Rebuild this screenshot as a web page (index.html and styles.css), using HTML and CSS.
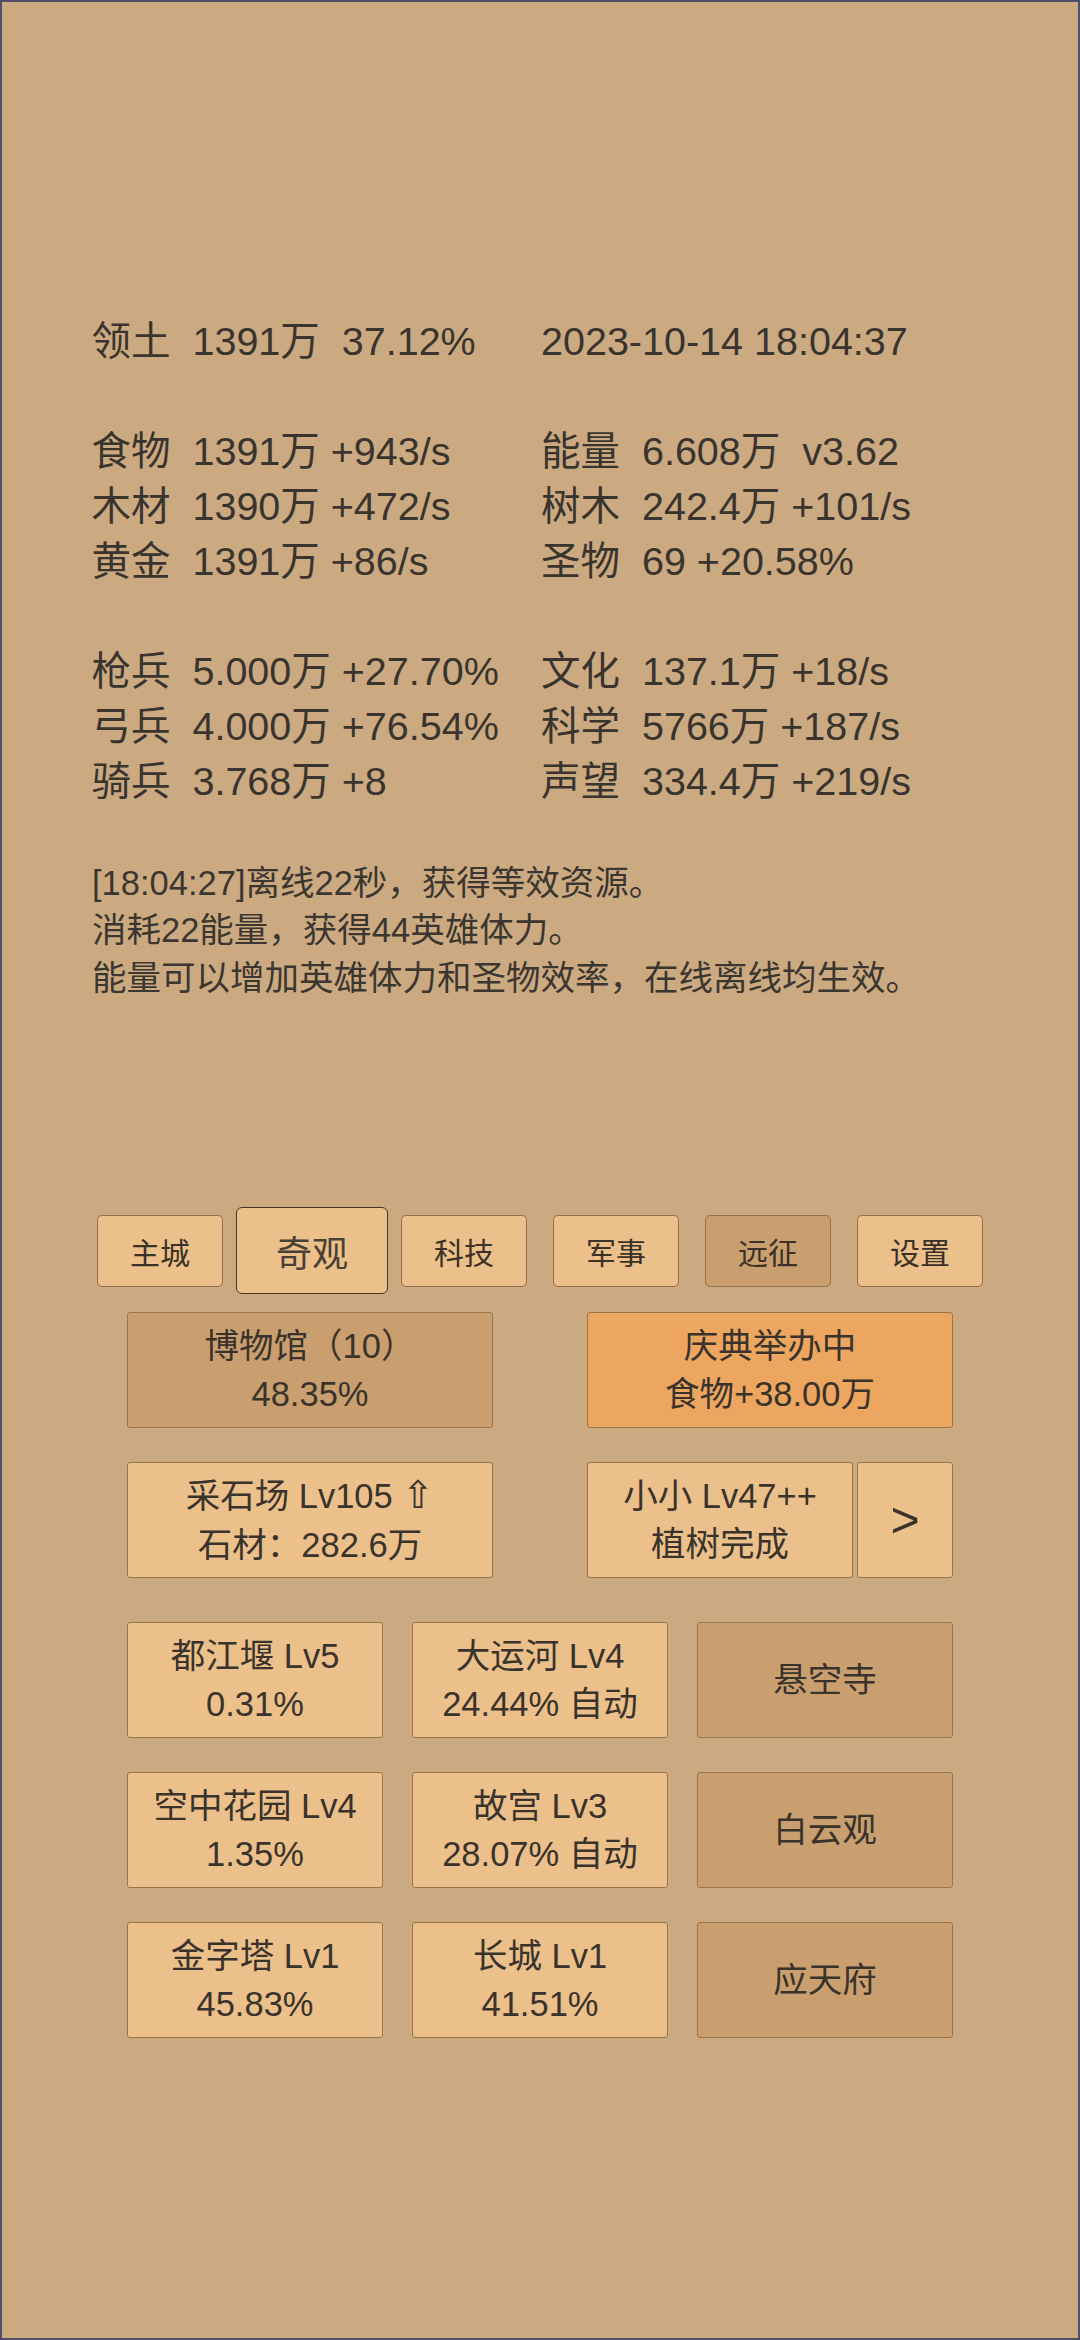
FILE: index.html
```html
<!DOCTYPE html>
<html lang="zh">
<head>
<meta charset="utf-8">
<title>奇观</title>
<link rel="stylesheet" href="styles.css">
</head>
<body>
<div class="screen">
  <section class="stats">
    <div class="grp">
      <div class="srow"><span>领土  1391万  37.12%</span><span>2023-10-14 18:04:37</span></div>
    </div>
    <div class="grp">
      <div class="srow"><span>食物  1391万 +943/s</span><span>能量  6.608万  v3.62</span></div>
      <div class="srow"><span>木材  1390万 +472/s</span><span>树木  242.4万 +101/s</span></div>
      <div class="srow"><span>黄金  1391万 +86/s</span><span>圣物  69 +20.58%</span></div>
    </div>
    <div class="grp">
      <div class="srow"><span>枪兵  5.000万 +27.70%</span><span>文化  137.1万 +18/s</span></div>
      <div class="srow"><span>弓兵  4.000万 +76.54%</span><span>科学  5766万 +187/s</span></div>
      <div class="srow"><span>骑兵  3.768万 +8</span><span>声望  334.4万 +219/s</span></div>
    </div>
  </section>

  <section class="log">
    <p>[18:04:27]离线22秒，获得等效资源。</p>
    <p>消耗22能量，获得44英雄体力。</p>
    <p>能量可以增加英雄体力和圣物效率，在线离线均生效。</p>
  </section>

  <nav class="tabs">
    <div class="slot"><div class="tab">主城</div></div>
    <div class="slot"><div class="tab selected">奇观</div></div>
    <div class="slot"><div class="tab">科技</div></div>
    <div class="slot"><div class="tab">军事</div></div>
    <div class="slot"><div class="tab dark">远征</div></div>
    <div class="slot"><div class="tab">设置</div></div>
  </nav>

  <section class="cards">
    <div class="pair">
      <div class="card wide dark"><span>博物馆（10）</span><span>48.35%</span></div>
      <div class="card wide orange"><span>庆典举办中</span><span>食物+38.00万</span></div>
    </div>
    <div class="pair second">
      <div class="card wide"><span>采石场 Lv105 <span class="arrow">⇧</span></span><span>石材：282.6万</span></div>
      <div class="split">
        <div class="card main"><span>小小 Lv47++</span><span>植树完成</span></div>
        <div class="card next">&gt;</div>
      </div>
    </div>
    <div class="grid3">
      <div class="card"><span>都江堰 Lv5</span><span>0.31%</span></div>
      <div class="card"><span>大运河 Lv4</span><span>24.44% 自动</span></div>
      <div class="card dark"><span>悬空寺</span></div>
      <div class="card"><span>空中花园 Lv4</span><span>1.35%</span></div>
      <div class="card"><span>故宫 Lv3</span><span>28.07% 自动</span></div>
      <div class="card dark"><span>白云观</span></div>
      <div class="card"><span>金字塔 Lv1</span><span>45.83%</span></div>
      <div class="card"><span>长城 Lv1</span><span>41.51%</span></div>
      <div class="card dark"><span>应天府</span></div>
    </div>
  </section>
</div>
</body>
</html>
```

FILE: styles.css
```css
html, body {
  margin: 0;
  padding: 0;
  background: #cbaa82;
}

.screen {
  width: 1080px;
  height: 2340px;
  box-sizing: border-box;
  border: 2px solid #4f5168;
  background: #cbaa82;
  color: #3a342e;
  font-family: "Liberation Sans", "Noto Sans CJK SC", sans-serif;
  overflow: hidden;
}

/* ---------- stats ---------- */
.stats {
  margin-top: 311.5px;
  padding-left: 89.5px;
  font-size: 39.5px;
  line-height: 55px;
}

.grp + .grp {
  margin-top: 55px;
}

.srow {
  display: grid;
  grid-template-columns: 449.5px auto;
  white-space: pre;
}

/* ---------- log ---------- */
.log {
  margin-top: 51px;
  padding-left: 90px;
  font-size: 34.5px;
  line-height: 47.5px;
  color: #3c3630;
}

.log p {
  margin: 0;
  white-space: nowrap;
}

/* ---------- tabs ---------- */
.tabs {
  margin-top: 205px;
  display: grid;
  grid-template-columns: repeat(6, 152px);
  justify-content: center;
  align-items: center;
  height: 87px;
}

.slot {
  display: flex;
  justify-content: center;
  align-items: center;
}

.tab {
  width: 126px;
  height: 72px;
  box-sizing: border-box;
  border: 1px solid #94714a;
  border-radius: 5px;
  background: #ebc08a;
  display: flex;
  justify-content: center;
  align-items: center;
  font-size: 30px;
  color: #3b3126;
}

.tab.dark {
  background: #c99f6f;
}

.tab.selected {
  width: 152px;
  height: 87px;
  border: 1.5px solid #4a3520;
  border-radius: 6px;
  font-size: 36px;
  color: #4a4037;
}

/* ---------- cards ---------- */
.cards {
  margin-top: 18px;
  padding: 0 125px;
}

.pair {
  display: flex;
  justify-content: space-between;
  height: 116px;
}

.pair.second {
  margin-top: 34px;
}

.card {
  box-sizing: border-box;
  border: 1px solid #9a7549;
  border-radius: 3px;
  background: #ebc08a;
  display: flex;
  flex-direction: column;
  justify-content: center;
  align-items: center;
  font-size: 34.5px;
  line-height: 48.5px;
  color: #3a332c;
  white-space: nowrap;
}

.card.dark {
  background: #c99f6f;
}

.card.orange {
  background: #eda660;
}

.card.wide {
  width: 366px;
  height: 116px;
}

.split {
  width: 366px;
  display: flex;
  gap: 4px;
}

.card.main {
  flex: 1;
}

.card.next {
  width: 96px;
  font-size: 50px;
}

.arrow {
  font-family: "DejaVu Sans", sans-serif;
  font-size: 38px;
  font-weight: 300;
}

.grid3 {
  margin-top: 44px;
  display: grid;
  grid-template-columns: repeat(3, 256px);
  grid-auto-rows: 116px;
  column-gap: 29px;
  row-gap: 34px;
}
```
